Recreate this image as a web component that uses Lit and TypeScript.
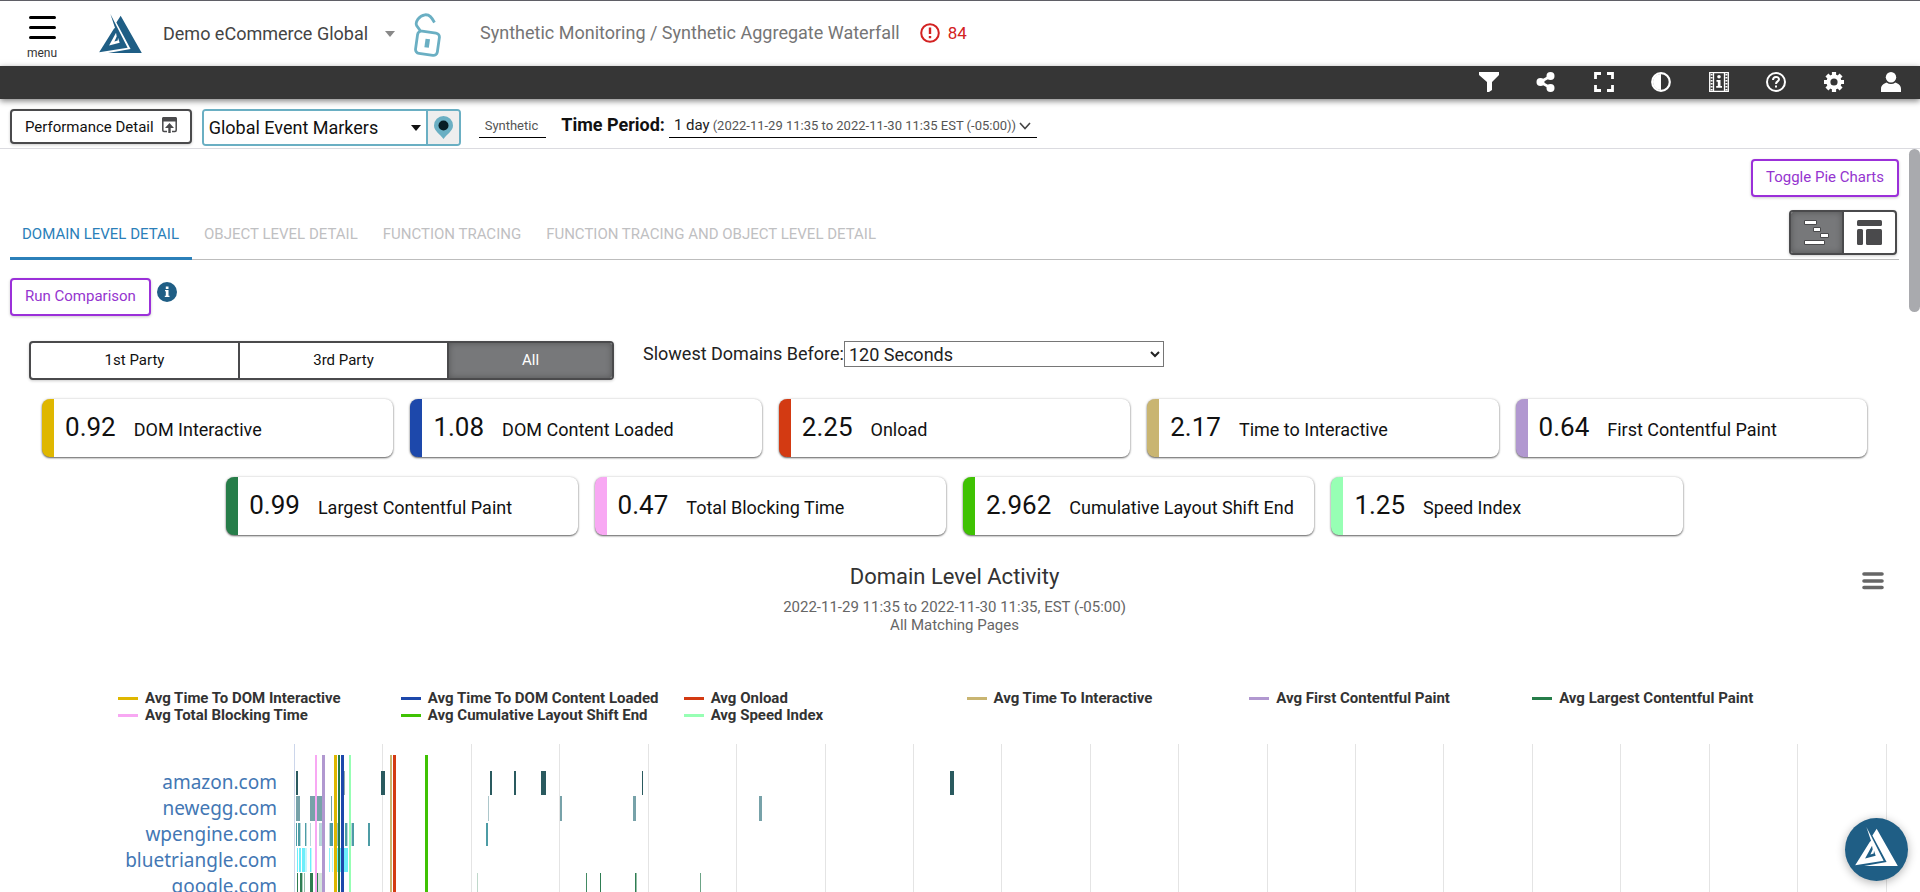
import { LitElement, html, css, svg } from "lit";
import { customElement } from "lit/decorators.js";

const METRICS = [
  ["0.92", "DOM Interactive", "#dfb700"],
  ["1.08", "DOM Content Loaded", "#1d48ab"],
  ["2.25", "Onload", "#d33a12"],
  ["2.17", "Time to Interactive", "#c9b571"],
  ["0.64", "First Contentful Paint", "#b198d0"],
  ["0.99", "Largest Contentful Paint", "#267d49"],
  ["0.47", "Total Blocking Time", "#f8a8f3"],
  ["2.962", "Cumulative Layout Shift End", "#3fc203"],
  ["1.25", "Speed Index", "#97ffb4"],
];

const LEGEND = [
  ["Avg Time To DOM Interactive", "#dfb700"],
  ["Avg Time To DOM Content Loaded", "#1d48ab"],
  ["Avg Onload", "#d33a12"],
  ["Avg Time To Interactive", "#c9b571"],
  ["Avg First Contentful Paint", "#b198d0"],
  ["Avg Largest Contentful Paint", "#267d49"],
  ["Avg Total Blocking Time", "#f8a8f3"],
  ["Avg Cumulative Layout Shift End", "#3fc203"],
  ["Avg Speed Index", "#97ffb4"],
];

const DOMAINS = ["amazon.com", "newegg.com", "wpengine.com", "bluetriangle.com", "google.com"];

/* Each bar: offset from the axis, width, opacity. */
type Bar = [number, number, number];
const ROWS: { top: number; height: number; color: string; bars: Bar[] }[] = [
  {
    top: 27, height: 24, color: "#2a5a5f",
    bars: [[2, 2, 1], [50, 1, 0.5], [87, 4, 1], [196, 2, 1], [220, 2, 1], [247, 5, 1], [348, 1, 1], [656, 4, 1]],
  },
  {
    top: 52, height: 25, color: "#77a2a9",
    bars: [[2, 4, 1], [16, 14, 1], [37, 1, 1], [194, 1, 0.6], [266, 2, 1], [339, 3, 1], [465, 3, 1]],
  },
  {
    top: 79, height: 23, color: "#4d9ca5",
    bars: [
      [2, 1, 1], [4, 2, 1], [6, 1, 0.4], [11, 1, 1], [12, 1, 0.4], [16, 1, 0.4], [25, 3, 0.4], [35, 1, 0.4],
      [36, 3, 1], [41, 4, 0.6], [51, 2, 1], [53, 1, 0.4], [57, 1, 0.4], [58, 2, 1], [74, 2, 1], [192, 2, 1],
    ],
  },
  {
    top: 104, height: 24, color: "#6ceefa",
    bars: [[3, 1, 1], [5, 2, 1], [8, 3, 1], [11, 2, 0.4], [16, 1, 1], [17, 1, 0.4], [35, 1, 0.8], [38, 1, 0.5], [41, 13, 1]],
  },
  {
    top: 129, height: 24, color: "#2e7d52",
    bars: [
      [3, 1, 1], [6, 2, 1], [8, 1, 0.4], [10, 1, 0.5], [16, 3, 1], [22, 2, 1], [24, 4, 0.2], [183, 1, 0.3],
      [292, 1, 0.9], [306, 1, 1], [341, 1, 1], [342, 1, 0.5], [406, 1, 0.7],
    ],
  },
];

/* Average markers: offset from the axis, width, colour. */
const MARKERS: [number, number, string][] = [
  [21, 2, "#f8a8f3"], [28, 3, "#b198d0"], [40, 3, "#dfb700"], [44, 2, "#267d49"], [47, 3, "#1d48ab"],
  [55, 2, "#97ffb4"], [96, 2, "#c9b571"], [99, 3, "#d33a12"], [131, 3, "#3fc203"],
];

const logo = html`<svg class="logo" viewBox="0 0 129 118" aria-hidden="true">
  <path d="M34 0 86 102 0 116 45 44 48 42z M51 57 30 95 62 87 57 72 56 80 46 83 53 68z" fill="currentColor" fill-rule="evenodd" />
  <path d="M65 5 129 118H27L95 106 52 26z" fill="currentColor" />
</svg>`;

const tools = [
  ["Filter", svg`<path d="M0 0h20v3l-7 7v8l-3 2H8V10L0 3z" fill="currentColor"/>`],
  ["Share", svg`<path d="M15 4 4 10l11 6" fill="none" stroke="currentColor" stroke-width="2.6"/><circle cx="14.500" cy="4" r="4" fill="currentColor"/><circle cx="4.500" cy="10" r="4" fill="currentColor"/><circle cx="14.500" cy="16" r="4" fill="currentColor"/>`],
  ["Full screen", svg`<path d="M1.500 7V1.500H7M13 1.500h5.500V7M18.500 13v5.500H13M7 18.500H1.500V13" fill="none" stroke="currentColor" stroke-width="2.800"/>`],
  ["Contrast", svg`<circle cx="10" cy="10" r="8.800" fill="none" stroke="currentColor" stroke-width="2.200"/><path d="M10 2a8 8 0 0 0 0 16z" fill="currentColor"/>`],
  ["Film strip", svg`<path d="M.700.700h18.600v18.600H.700zM4.500 1v18M15.500 1v18" fill="none" stroke="currentColor" stroke-width="1.300"/><path d="M2.600 2v17M17.400 2v17" stroke="currentColor" stroke-width="2" stroke-dasharray="1.500 1.500"/><circle cx="10" cy="4.800" r="1.800" fill="currentColor"/><path d="M7.500 8h4v6h1.500v1.800H7.200V14h1.600V9.800H7.500z" fill="currentColor"/>`],
  ["Help", svg`<circle cx="10" cy="10" r="9" fill="none" stroke="currentColor" stroke-width="2"/><path d="M7 8c0-4 6-4 6-.700C13 9.500 10 9.300 10 12" fill="none" stroke="currentColor" stroke-width="2"/><path d="M9 13.500h2v2H9z" fill="currentColor"/>`],
  ["Settings", svg`<circle cx="10" cy="10" r="5.600" fill="none" stroke="currentColor" stroke-width="4"/><g stroke="currentColor" stroke-width="4.200">${[0, 45, 90, 135].map((a) => svg`<path d="M10 0v3.500M10 16.500V20" transform="rotate(${a} 10 10)"/>`)}</g>`],
  ["Account", svg`<circle cx="10" cy="5.200" r="5.200" fill="currentColor"/><path d="M0 20v-3c0-4 3-5.500 5.500-6.500 3 2 6 2 9 0C17 11.500 20 13 20 17v3z" fill="currentColor"/>`],
] as const;

@customElement("app-root")
export class AppRoot extends LitElement {
  static styles = css`
    :host {
      display: flex;
      flex-direction: column;
      height: 100vh;
      overflow: hidden;
      background: #fff;
      color: #111;
      font: 15px/18px Roboto, "Liberation Sans", sans-serif;
    }
    * { box-sizing: border-box; }
    button, select { font: inherit; color: inherit; margin: 0; }
    button { cursor: pointer; background: none; border: 0; padding: 0; }
    svg { display: block; flex: none; }

    .top { display: flex; align-items: center; height: 66px; flex: none; border-top: 1px solid #5f5f66; padding-left: 26px; font-size: 18px; line-height: 22px; }
    .menu { display: flex; flex-direction: column; align-items: center; gap: 7px; font-size: 12px; line-height: 14px; color: #333; padding-top: 8px; width: 32px; }
    .brand { color: #1f5e85; margin-left: 41px; }
    .logo { width: 43px; height: 39px; }
    .site { display: flex; align-items: center; gap: 17px; margin-left: 21px; color: #444; }
    .lock { margin: 2px 0 0 19px; }
    .crumbs { margin: 0 0 2px 38px; color: #757575; }
    .alert { display: flex; align-items: center; gap: 8px; margin: 0 0 2px 20px; color: #d32222; text-decoration: none; font-size: 17px; }

    .tools { display: flex; justify-content: flex-end; align-items: center; height: 33px; flex: none; background: #363636; color: #fff; padding: 0 19px 2px 0; box-shadow: 0 2px 6px rgba(0, 0, 0, 0.5); z-index: 1; }
    .tool-set { display: flex; justify-content: space-between; width: 422px; }

    .filters { display: flex; align-items: center; flex: none; height: 50px; padding: 8px 10px 0; border-bottom: 1px solid #dbdbe0; }
    .outline { border: 2px solid #4a4a4c; border-radius: 4px; background: #fff; box-shadow: 0 1px 3px rgba(0, 0, 0, 0.2); }
    .detail { display: flex; align-items: center; gap: 8px; height: 35px; padding: 0 13px; margin-bottom: 2px; }
    .detail svg { margin-bottom: 3px; }
    .events { display: flex; margin-left: 10px; width: 259px; height: 37px; border: 2px solid #6aafc3; border-radius: 4px; overflow: hidden; }
    .select-box { position: relative; flex: 1; display: flex; }
    .select-box select { appearance: none; flex: 1; border: 0; background: #fff; padding: 0 24px 0 5px; font-size: 18px; }
    .select-box svg { position: absolute; right: 5px; top: 14px; pointer-events: none; }
    .pin { display: flex; justify-content: center; align-items: center; width: 33px; border-left: 2px solid #6aafc3; background: #eee; }
    .under { border-bottom: 1px solid #000; color: #555; font-size: 13px; height: 22px; margin-bottom: 2px; }
    .kind { margin-left: 18px; padding: 0 8px 0 6px; }
    .period-label { margin: 0 4px 6px 15px; font-size: 18px; line-height: 22px; font-weight: 700; }
    .period { display: flex; align-items: baseline; gap: 3px; padding: 0 6px 0 5px; white-space: nowrap; }
    .now { font-size: 15px; color: #222; }

    .body { display: flex; flex: 1; min-height: 0; }
    .scroll { flex: 1; min-width: 0; overflow: hidden; padding: 10px 10px 0; }
    .bar { flex: none; width: 11px; }
    .thumb { height: 163px; border-radius: 6px; background: #a9aaae; }
    .purple { border: 2px solid #9b30d9; border-radius: 4px; color: #9535cf; background: #fff; height: 38px; padding: 7px 13px 9px; box-shadow: 0 1px 3px rgba(0, 0, 0, 0.2); }
    .right { display: flex; justify-content: flex-end; }

    .tab-row { display: flex; justify-content: space-between; height: 51px; margin-top: 12px; border-bottom: 1px solid #bdbdbd; }
    .tabs { display: flex; }
    .tab { height: 51px; padding: 2px 13px 0 12px; border-bottom: 3px solid transparent; color: #bfc0c2; text-transform: uppercase; }
    .tab.on { color: #2b7fb9; border-bottom-color: #2b80b9; }
    .views { display: flex; width: 108px; height: 45px; margin: 1px 2px 0 0; overflow: hidden; }
    .view { display: flex; flex: 1; align-items: center; justify-content: center; color: #4a4a4c; }
    .view + .view { border-left: 2px solid #4a4a4c; }
    .pressed, .view.pressed { background: #77787a; color: #fff; box-shadow: inset 0 0 6px rgba(0, 0, 0, 0.3); }

    .compare { display: flex; gap: 6px; margin-top: 18px; }
    .info { height: 20px; margin-top: 4px; }
    .query { display: flex; align-items: flex-start; margin: 25px 0 0 19px; }
    .party { display: grid; grid-template-columns: 207px 209px 1fr; width: 585px; height: 39px; overflow: hidden; }
    .party button + button { border-left: 2px solid #4a4a4c; }
    .party button { padding-bottom: 2px; }
    .slowest { display: flex; align-items: center; margin-left: 29px; font-size: 18px; color: #222; }
    .slowest select { width: 320px; height: 26px; border: 1px solid #767676; background: #fff; font-size: 18px; line-height: 22px; }

    .cards { display: flex; flex-wrap: wrap; justify-content: center; gap: 20px 17px; margin: 19px 31px 0; }
    .card { display: flex; align-items: baseline; gap: 18px; flex: 0 0 calc(20% - 14px); height: 58px; border-left: 12px solid; border-radius: 8px; padding: 12px 0 0 11px; background: #fff; box-shadow: 0 1px 2px rgba(0, 0, 0, 0.6), 0 0 3px rgba(0, 0, 0, 0.15); white-space: nowrap; }
    .value { font-size: 26px; line-height: 32px; color: #111; }
    .name { font-size: 18px; line-height: 22px; color: #111; }

    .chart-head { display: grid; grid-template-columns: 60px 1fr 60px; margin-top: 29px; text-align: center; }
    .chart-head h2 { margin: 0; font-size: 22px; line-height: 26px; font-weight: 400; color: #333; }
    .chart-head p { margin: 8px 0 0; color: #666; }
    .chart-menu { justify-self: end; align-self: start; margin: 8px 15px 0 0; }
    .legend { display: grid; grid-template-columns: repeat(6, 1fr); margin: 56px 84px 0 108px; list-style: none; padding: 0; font-size: 15px; line-height: 17px; font-weight: 700; color: #333; }
    .legend li { display: flex; align-items: center; gap: 7px; white-space: nowrap; }
    .key { width: 20px; height: 3px; flex: none; }
    .plot { display: grid; grid-template-columns: 267px 1fr; gap: 17px; margin: 20px 11px 0 0; }
    .domains { display: flex; flex-direction: column; align-items: flex-end; padding-top: 25px; }
    .domains a { font: 19px/26px "Noto Sans", "Open Sans", sans-serif; color: #4377b4; text-decoration: none; }
    .plot svg { width: 100%; height: 160px; }

    .fab { position: fixed; right: 12px; bottom: 11px; z-index: 2; display: flex; justify-content: center; padding-top: 9px; width: 63px; height: 63px; border-radius: 50%; background: #1f5e85; color: #fff; box-shadow: 0 2px 10px rgba(0, 0, 0, 0.3); }
  `;

  render() {
    return html`
      <header class="top">
        <button class="menu">
          <svg width="27" height="23" viewBox="0 0 27 23"><path d="M1.500 1.500h24M1.500 11.500h24M1.500 21.500h24" stroke="#000" stroke-width="3" stroke-linecap="round" /></svg>
          menu
        </button>
        <a class="brand" aria-label="Home">${logo}</a>
        <button class="site">
          Demo eCommerce Global
          <svg width="10" height="6" viewBox="0 0 10 6"><path d="M0 0h10L5 6z" fill="#888" /></svg>
        </button>
        <button class="lock" aria-label="Unlocked">
          <svg width="28" height="44" viewBox="0 0 28 44" fill="none" stroke="#6aafc3" stroke-width="2.800">
            <rect x="2.500" y="19" width="22" height="22.500" rx="4" transform="rotate(8 13.500 30)" />
            <path d="M6.500 18 2.600 12.500C1 9 5 2.500 11 1.800c5-.500 7 3.500 9.500 7.700" />
            <path d="m13.800 26-1.200 8.500" stroke-width="4.500" />
          </svg>
        </button>
        <span class="crumbs">Synthetic Monitoring / Synthetic Aggregate Waterfall</span>
        <a class="alert">
          <svg width="20" height="20" viewBox="0 0 20 20"><circle cx="10" cy="10" r="8.800" fill="none" stroke="currentColor" stroke-width="2" /><path d="M10 4.500v6.500M10 13v2.200" stroke="currentColor" stroke-width="2.400" /></svg>
          84
        </a>
      </header>

      <nav class="tools">
        <div class="tool-set">
          ${tools.map(([label, art]) => html`<button aria-label=${label}><svg width="20" height="20" viewBox="0 0 20 20">${art}</svg></button>`)}
        </div>
      </nav>

      <section class="filters">
        <button class="outline detail">
          Performance Detail
          <svg width="15" height="16" viewBox="0 0 15 16"><path d="M5 14.500H2a1.200 1.200 0 0 1-1.200-1.200V2M10 14.500h3a1.200 1.200 0 0 0 1.200-1.200V2" fill="none" stroke="#4a4a4c" stroke-width="1.500" /><path d="M0 4.500V1.500C0 .600.600 0 1.500 0h12c.900 0 1.500.600 1.500 1.500v3zM7.500 6 12 11H8.700v5H6.300v-5H3z" fill="#4a4a4c" /></svg>
        </button>
        <div class="events">
          <div class="select-box">
            <select aria-label="Event markers"><option>Global Event Markers</option></select>
            <svg width="10" height="6" viewBox="0 0 10 6"><path d="M0 0h10L5 6z" fill="#111" /></svg>
          </div>
          <button class="pin" aria-label="Add marker">
            <svg width="19" height="24" viewBox="0 0 19 24"><path d="M9.500 23C6 18 0 15 0 9.500a9.500 9.500 0 0 1 19 0C19 15 13 18 9.500 23z" fill="#6aafc3" /><circle cx="9.500" cy="9.500" r="5" fill="#071e26" /></svg>
          </button>
        </div>
        <button class="under kind">Synthetic</button>
        <span class="period-label">Time Period:</span>
        <button class="under period">
          <span class="now">1 day</span>
          <span>(2022-11-29 11:35 to 2022-11-30 11:35 EST (-05:00))</span>
          <svg width="12" height="8" viewBox="0 0 12 8"><path d="m1 1 5 5.500L11 1" fill="none" stroke="#444" stroke-width="1.600" /></svg>
        </button>
      </section>

      <div class="body">
        <main class="scroll">
          <div class="right"><button class="purple">Toggle Pie Charts</button></div>
          <div class="tab-row">
            <div class="tabs" role="tablist">
              <button class="tab on" role="tab">Domain Level Detail</button>
              <button class="tab" role="tab">Object Level Detail</button>
              <button class="tab" role="tab">Function Tracing</button>
              <button class="tab" role="tab">Function Tracing and Object Level Detail</button>
            </div>
            <div class="outline views">
              <button class="view pressed" aria-label="Waterfall view">
                <svg width="26" height="26" viewBox="0 0 26 26" fill="#fff" stroke="#4a4a4c"><path d="M.500.500h12v4H.500zM9.500 7.500h7v4h-7zM16.500 13.500h8v4h-8zM.500 20.500h20v4H.500z" /></svg>
              </button>
              <button class="view" aria-label="Dashboard view">
                <svg width="25" height="25" viewBox="0 0 25 25" fill="currentColor"><rect width="25" height="6" rx="1.500" /><rect y="9" width="6" height="16" rx="1.500" /><rect x="9" y="9" width="16" height="16" rx="1.500" /></svg>
              </button>
            </div>
          </div>

          <div class="compare">
            <button class="purple">Run Comparison</button>
            <button class="info" aria-label="Information">
              <svg width="20" height="20" viewBox="0 0 20 20"><circle cx="10" cy="10" r="10" fill="#1f5e85" /><path d="M8.800 4.500h2.700v2.400H8.800zM8 8h3.500v5.800h1V15H7.800v-1.200h1V9.200H8z" fill="#fff" /></svg>
            </button>
          </div>

          <div class="query">
            <div class="outline party">
              <button>1st Party</button>
              <button>3rd Party</button>
              <button class="pressed">All</button>
            </div>
            <div class="slowest">
              <label for="slowest">Slowest Domains Before:</label>
              <select id="slowest"><option>120 Seconds</option></select>
            </div>
          </div>

          <div class="cards">
            ${METRICS.map(([value, name, color]) => html`
              <div class="card" style="border-left-color:${color}"><span class="value">${value}</span><span class="name">${name}</span></div>`)}
          </div>

          <div class="chart-head">
            <span></span>
            <div>
              <h2>Domain Level Activity</h2>
              <p>2022-11-29 11:35 to 2022-11-30 11:35, EST (-05:00)<br />All Matching Pages</p>
            </div>
            <button class="chart-menu" aria-label="Chart menu">
              <svg width="22" height="18" viewBox="0 0 22 18"><path d="M2 2h18M2 9h18M2 15.500h18" stroke="#666" stroke-width="3.600" stroke-linecap="round" /></svg>
            </button>
          </div>
          <ul class="legend">
            ${LEGEND.map(([name, color]) => html`<li><span class="key" style="background:${color}"></span>${name}</li>`)}
          </ul>
          <div class="plot">
            <div class="domains">${DOMAINS.map((d) => html`<a href="#${d}">${d}</a>`)}</div>
            <svg viewBox="0 0 1594 160" preserveAspectRatio="none" shape-rendering="crispEdges">
              ${Array.from({ length: 19 }, (_, i) => svg`<rect x=${Math.round(i * 88.42)} y="0" width="1" height="160" fill=${i ? "#e4e4e4" : "#ccd6eb"} />`)}
              ${ROWS.map((r) => r.bars.map(([x, w, o]) => svg`<rect x=${x} y=${r.top} width=${w} height=${r.height} fill=${r.color} opacity=${o} />`))}
              ${MARKERS.map(([x, w, c]) => svg`<rect x=${x} y="11" width=${w} height="149" fill=${c} />`)}
            </svg>
          </div>
        </main>
        <div class="bar"><div class="thumb"></div></div>
      </div>
      <button class="fab" aria-label="Support">${logo}</button>
    `;
  }
}
